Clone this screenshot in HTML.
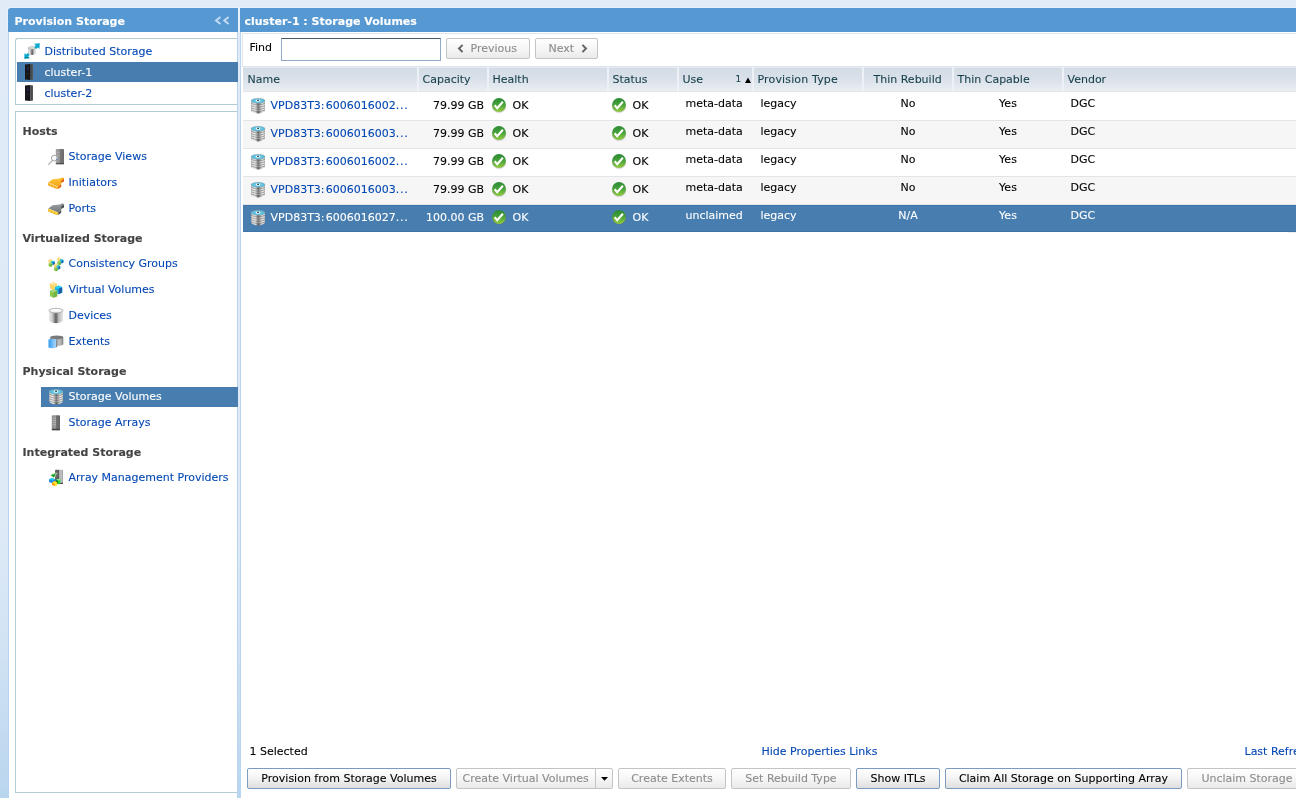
<!DOCTYPE html>
<html>
<head>
<meta charset="utf-8">
<title>Provision Storage</title>
<style>
html,body{margin:0;padding:0;}
body{width:1296px;height:798px;overflow:hidden;position:relative;
  font-family:"DejaVu Sans","Liberation Sans",sans-serif;font-size:11px;color:#000;
  background:linear-gradient(to bottom,#e0ebf7 0px,#dfeaf7 520px,#d2e3f4 640px,#b9d5ee 798px);}
#app{position:absolute;left:0;top:0;width:1296px;height:798px;will-change:transform;}
a{color:#0448b4;text-decoration:none;}
div,span,a,input{box-sizing:border-box;}
.t{position:absolute;white-space:nowrap;line-height:14px;height:14px;-webkit-text-stroke:0.1px currentColor;}
svg{position:absolute;display:block;overflow:visible;}
.hd{position:absolute;top:8px;height:24px;background:#5698d2;color:#fff;font-weight:bold;box-shadow:0 0 0 1px rgba(255,255,255,.28);}
#lbody{position:absolute;left:8px;top:32px;width:230px;height:770px;background:#fff;border-left:1px solid #b8d4f0;border-right:1px solid #b8d4f0;}
.box{position:absolute;left:15px;width:222px;border:1px solid #b3cbd3;border-right:none;background:#fff;}
.sel{position:absolute;background:#477daf;}
.w{color:#fff;}
.g{font-weight:bold;color:#444;}
#rbody{position:absolute;left:240px;top:32px;width:1060px;height:770px;background:#fff;border-left:1px solid #b8d4f0;}
#tbar{position:absolute;left:242px;top:33px;width:1060px;height:34px;border:1px solid #dde6f0;}
#find{position:absolute;left:281px;top:38px;width:160px;height:23px;background:#fff;border:1px solid #92aac8;border-top-color:#4a586c;}
.btn{position:absolute;height:21px;border:1px solid #7b9cc0;-webkit-text-stroke:0.1px currentColor;border-radius:2px;background:linear-gradient(to bottom,#ffffff 0%,#f3f3f3 50%,#dedede 100%);text-align:center;line-height:19px;white-space:nowrap;color:#000;}
.btn.dis{border-color:#c4c4c4;color:#8c8c8c;background:linear-gradient(to bottom,#ffffff 0%,#f6f6f6 50%,#eaeaea 100%);}
#thead{position:absolute;left:243px;top:67px;width:1060px;height:25px;background:linear-gradient(to bottom,#d3dbe6 0%,#d9e0e9 45%,#eaeef3 100%);border-top:1px solid #e6e9ec;border-bottom:1px solid #e3e5e8;}
.th{color:#163f4a;}
.sep{position:absolute;top:67px;width:2px;height:25px;background:#edf1f6;}
.row{position:absolute;left:243px;width:1060px;height:28px;border-bottom:1px solid #e4e4e4;}
.alt{background:#f6f6f6;}
</style>
</head>
<body>
<div id="app">
<div class="hd" style="left:8px;width:230px;border-top-left-radius:3px;"></div>
<span class="t w" style="left:14.5px;top:15px;font-weight:bold">Provision Storage</span>
<svg style="left:214px;top:16px" width="16" height="9" viewBox="0 0 16 9"><path d="M6.4 0.9L2 4.5L6.4 8.1M14.6 0.9L10.2 4.5L14.6 8.1" fill="none" stroke="#c6dcf3" stroke-width="1.9"/></svg>
<div id="lbody"></div>
<div class="box" style="top:38px;height:67px;border-top-left-radius:3px;"></div>
<svg style="left:24px;top:43px" width="16" height="16" viewBox="0 0 16 16"><defs><linearGradient id="i2_c" x1="0" x2="1" y1="0" y2="0"><stop offset="0" stop-color="#cfcfcf"/><stop offset=".25" stop-color="#e2e2e2"/><stop offset=".55" stop-color="#5a5a5a"/><stop offset=".68" stop-color="#909090"/><stop offset=".85" stop-color="#dadada"/><stop offset="1" stop-color="#c6c6c6"/></linearGradient></defs>
<path d="M4.1 5 L4.1 11 Q7.8 13.2 11.5 11 L11.5 5Z" fill="url(#i2_c)"/>
<ellipse cx="7.8" cy="5" rx="3.7" ry="1.2" fill="#e4e4e4" stroke="#a6a6a6" stroke-width=".7"/>
<path d="M15.8 0.2L10.2 0.7L11.8 2.4L10.3 4L12.2 5.9L13.8 4.4L15.4 6Z" fill="#09a9cc"/>
<path d="M0.2 15.8L5.8 15.3L4.2 13.6L5.7 12L3.8 10.1L2.2 11.6L0.6 10Z" fill="#09a9cc"/>
<path d="M0.6 15.5L5.4 15.1L4.4 14.1L1 14.4Z" fill="#067a96"/></svg>
<a class="t " style="left:44.5px;top:45px;">Distributed Storage</a>
<div class="sel" style="left:17px;top:62px;width:221px;height:20px;"></div>
<svg style="left:25px;top:64px" width="8" height="16" viewBox="0 0 8 16"><defs><linearGradient id="i3_s" x1="0" x2="1"><stop offset="0" stop-color="#3c3c3e"/><stop offset="1" stop-color="#5a5a5c"/></linearGradient></defs>
<path d="M0 0.4L5.2 0L5.2 16L0 15.6Z" fill="#17171b"/>
<path d="M5.2 0L8 0.6L8 15.4L5.2 16Z" fill="url(#i3_s)"/>
<rect x="1.4" y="2.4" width="2.6" height="1.4" fill="#23232c"/>
<rect x="1.8" y="4.5" width="2" height="0.8" fill="#2a38a0"/>
<rect x="0.8" y="9.4" width="3.6" height="0.5" fill="#2c2c32"/></svg>
<span class="t w" style="left:44.5px;top:66px;">cluster-1</span>
<svg style="left:25px;top:85px" width="8" height="16" viewBox="0 0 8 16"><defs><linearGradient id="i4_s" x1="0" x2="1"><stop offset="0" stop-color="#3c3c3e"/><stop offset="1" stop-color="#5a5a5c"/></linearGradient></defs>
<path d="M0 0.4L5.2 0L5.2 16L0 15.6Z" fill="#17171b"/>
<path d="M5.2 0L8 0.6L8 15.4L5.2 16Z" fill="url(#i4_s)"/>
<rect x="1.4" y="2.4" width="2.6" height="1.4" fill="#23232c"/>
<rect x="1.8" y="4.5" width="2" height="0.8" fill="#2a38a0"/>
<rect x="0.8" y="9.4" width="3.6" height="0.5" fill="#2c2c32"/></svg>
<a class="t " style="left:44.5px;top:87px;">cluster-2</a>
<div class="box" style="top:111px;height:682px;"></div>
<span class="t g" style="left:22.5px;top:125px;">Hosts</span>
<svg style="left:48px;top:149px" width="16" height="16" viewBox="0 0 16 16"><defs><linearGradient id="i5_t" x1="0" x2="1"><stop offset="0" stop-color="#a2a2a2"/><stop offset=".5" stop-color="#929292"/><stop offset=".55" stop-color="#767676"/><stop offset="1" stop-color="#6c6c6c"/></linearGradient></defs>
<rect x="7.8" y="0" width="8.2" height="15.2" rx=".8" fill="url(#i5_t)"/>
<rect x="7.8" y="14.1" width="8.2" height="1.1" fill="#4a4a4a"/>
<rect x="8.6" y="3" width="3" height=".6" fill="#b8b8b8"/><rect x="8.6" y="6.6" width="3" height=".6" fill="#b8b8b8"/>
<line x1="4.4" y1="11.4" x2="0.8" y2="15.2" stroke="#bdbdbd" stroke-width="1.5" stroke-linecap="round"/>
<circle cx="6.3" cy="9.1" r="2.9" fill="#f6f8fa" stroke="#a6a6a6" stroke-width="1"/>
<circle cx="8.6" cy="10.4" r=".6" fill="#5a80d0"/></svg>
<a class="t " style="left:68.5px;top:150px;">Storage Views</a>
<svg style="left:48px;top:175px" width="16" height="16" viewBox="0 0 16 16"><defs><linearGradient id="i6_g" x1="0" y1="0" x2="0" y2="1"><stop offset="0" stop-color="#ffc83a"/><stop offset="1" stop-color="#f3a41a"/></linearGradient></defs>
<path d="M12.4 3.6L14.6 2.6L16 3.4L16 6.4L13.2 8Z" fill="#e8600c"/>
<path d="M0.3 7.4L4.6 4.2L11.6 3.6L14.6 2.6L16 3.4L13.2 5.2L13.2 9.2L10.2 11.4Z" fill="url(#i6_g)"/>
<path d="M10.2 11.4L13.2 9.2L13.2 11.8L10.2 14Z" fill="#e8600c"/>
<path d="M0.2 7.4L10.2 11.4L10.2 14L7.6 13.6L0.2 10.6Z" fill="#f0a010"/>
<path d="M0.6 8.2L9.8 11.9" stroke="#fde8b0" stroke-width=".7" fill="none"/>
<rect x="1.6" y="9.3" width="1.5" height="1.5" fill="#ffd040"/><rect x="4.5" y="10.5" width="1.5" height="1.5" fill="#ffd040"/><rect x="7.4" y="11.6" width="1.5" height="1.5" fill="#ffd040"/></svg>
<a class="t " style="left:68.5px;top:176px;">Initiators</a>
<svg style="left:48px;top:201px" width="16" height="16" viewBox="0 0 16 16"><defs><linearGradient id="i7_g" x1="0" y1="0" x2="0" y2="1"><stop offset="0" stop-color="#9a9ea2"/><stop offset="1" stop-color="#74787c"/></linearGradient></defs>
<path d="M12.4 3.6L14.6 2.6L16 3.4L16 6.4L13.2 8Z" fill="#4c5054"/>
<path d="M0.3 7.4L4.6 4.2L11.6 3.6L14.6 2.6L16 3.4L13.2 5.2L13.2 9.2L10.2 11.4Z" fill="url(#i7_g)"/>
<path d="M10.2 11.4L13.2 9.2L13.2 11.8L10.2 14Z" fill="#4c5054"/>
<path d="M0.2 7.4L10.2 11.4L10.2 14L7.6 13.6L0.2 10.6Z" fill="#e8b010"/>
<path d="M0.6 8.2L9.8 11.9" stroke="#fdeeb0" stroke-width=".7" fill="none"/>
<rect x="1.6" y="9.3" width="1.5" height="1.5" fill="#ffd83a"/><rect x="4.5" y="10.5" width="1.5" height="1.5" fill="#ffd83a"/><rect x="7.4" y="11.6" width="1.5" height="1.5" fill="#ffd83a"/></svg>
<a class="t " style="left:68.5px;top:202px;">Ports</a>
<span class="t g" style="left:22.5px;top:232px;">Virtualized Storage</span>
<svg style="left:48px;top:256px" width="16" height="16" viewBox="0 0 16 16"><polygon points="0.50,3.90 2.30,3.00 4.10,3.90 4.10,6.30 2.30,7.00 0.50,6.30" fill="#fbd46c"/><polygon points="0.50,3.90 2.30,3.00 4.10,3.90 2.30,4.70" fill="#fde6a4"/><polygon points="3.10,5.60 4.90,4.80 6.70,5.60 6.70,8.30 4.90,9.10 3.10,8.30" fill="#18b6e8"/><polygon points="3.10,5.60 4.90,4.80 6.70,5.60 4.90,6.40" fill="#22d2f4"/><polygon points="4.90,6.40 6.70,5.60 6.70,8.30 4.90,9.10" fill="#1d5ca8"/><polygon points="0.60,7.40 2.40,6.60 4.20,7.40 4.20,10.10 2.40,10.90 0.60,10.10" fill="#8cc850"/><polygon points="0.60,7.40 2.40,6.60 4.20,7.40 2.40,8.20" fill="#a8d878"/><polygon points="2.40,8.20 4.20,7.40 4.20,10.10 2.40,10.90" fill="#74b444"/><polygon points="9.20,2.20 11.00,1.30 12.80,2.20 12.80,4.60 11.00,5.30 9.20,4.60" fill="#fbd46c"/><polygon points="9.20,2.20 11.00,1.30 12.80,2.20 11.00,3.00" fill="#fde6a4"/><polygon points="11.80,3.90 13.60,3.10 15.40,3.90 15.40,6.60 13.60,7.40 11.80,6.60" fill="#18b6e8"/><polygon points="11.80,3.90 13.60,3.10 15.40,3.90 13.60,4.70" fill="#22d2f4"/><polygon points="13.60,4.70 15.40,3.90 15.40,6.60 13.60,7.40" fill="#1d5ca8"/><polygon points="9.30,5.70 11.10,4.90 12.90,5.70 12.90,8.40 11.10,9.20 9.30,8.40" fill="#8cc850"/><polygon points="9.30,5.70 11.10,4.90 12.90,5.70 11.10,6.50" fill="#a8d878"/><polygon points="11.10,6.50 12.90,5.70 12.90,8.40 11.10,9.20" fill="#74b444"/><polygon points="6.00,8.30 7.80,7.40 9.60,8.30 9.60,10.70 7.80,11.40 6.00,10.70" fill="#fbd46c"/><polygon points="6.00,8.30 7.80,7.40 9.60,8.30 7.80,9.10" fill="#fde6a4"/><polygon points="8.60,10.00 10.40,9.20 12.20,10.00 12.20,12.70 10.40,13.50 8.60,12.70" fill="#18b6e8"/><polygon points="8.60,10.00 10.40,9.20 12.20,10.00 10.40,10.80" fill="#22d2f4"/><polygon points="10.40,10.80 12.20,10.00 12.20,12.70 10.40,13.50" fill="#1d5ca8"/><polygon points="6.10,11.80 7.90,11.00 9.70,11.80 9.70,14.50 7.90,15.30 6.10,14.50" fill="#8cc850"/><polygon points="6.10,11.80 7.90,11.00 9.70,11.80 7.90,12.60" fill="#a8d878"/><polygon points="7.90,12.60 9.70,11.80 9.70,14.50 7.90,15.30" fill="#74b444"/></svg>
<a class="t " style="left:68.5px;top:257px;">Consistency Groups</a>
<svg style="left:48px;top:282px" width="16" height="16" viewBox="0 0 16 16"><polygon points="1.80,1.80 5.40,0.00 9.00,1.80 9.00,6.60 5.40,8.00 1.80,6.60" fill="#fbd46c"/><polygon points="1.80,1.80 5.40,0.00 9.00,1.80 5.40,3.40" fill="#fde6a4"/><polygon points="7.00,5.20 10.60,3.60 14.20,5.20 14.20,10.60 10.60,12.20 7.00,10.60" fill="#18b6e8"/><polygon points="7.00,5.20 10.60,3.60 14.20,5.20 10.60,6.80" fill="#22d2f4"/><polygon points="10.60,6.80 14.20,5.20 14.20,10.60 10.60,12.20" fill="#1d5ca8"/><polygon points="2.00,8.80 5.60,7.20 9.20,8.80 9.20,14.20 5.60,15.80 2.00,14.20" fill="#8cc850"/><polygon points="2.00,8.80 5.60,7.20 9.20,8.80 5.60,10.40" fill="#a8d878"/><polygon points="5.60,10.40 9.20,8.80 9.20,14.20 5.60,15.80" fill="#74b444"/></svg>
<a class="t " style="left:68.5px;top:283px;">Virtual Volumes</a>
<svg style="left:48px;top:308px" width="16" height="16" viewBox="0 0 16 16"><defs><linearGradient id="i10_c" x1="0" x2="1"><stop offset="0" stop-color="#ececec"/><stop offset=".25" stop-color="#c8c8c8"/><stop offset=".5" stop-color="#5c5c5c"/><stop offset=".68" stop-color="#b8b8b8"/><stop offset="1" stop-color="#e8e8e8"/></linearGradient></defs>
<path d="M0.9 2.6L0.9 13 Q8 17.4 15.1 13L15.1 2.6Z" fill="url(#i10_c)"/>
<ellipse cx="8" cy="2.6" rx="7.1" ry="2.3" fill="#efefef" stroke="#a8a8a8" stroke-width=".8"/>
<ellipse cx="8" cy="2.2" rx="4.6" ry="1.3" fill="#fafafa"/></svg>
<a class="t " style="left:68.5px;top:309px;">Devices</a>
<svg style="left:48px;top:334px" width="16" height="16" viewBox="0 0 16 16"><defs><linearGradient id="i11_c" x1="0" x2="1"><stop offset="0" stop-color="#8a8a8a"/><stop offset=".5" stop-color="#c6c6c6"/><stop offset=".8" stop-color="#b4b4b4"/><stop offset="1" stop-color="#7c7c7c"/></linearGradient>
<linearGradient id="i11_b" x1="0" x2="1"><stop offset="0" stop-color="#2e9af2"/><stop offset=".6" stop-color="#86c4f8"/><stop offset="1" stop-color="#b2daf9"/></linearGradient></defs>
<path d="M2.2 3.4L2.2 10.6 Q8.8 13.6 15.3 10.6L15.3 3.4Z" fill="url(#i11_c)"/>
<ellipse cx="8.75" cy="3.4" rx="6.55" ry="1.9" fill="#7a7a7a"/>
<path d="M0.5 5.6 Q4.6 4 8.8 5.4 L8.8 13.2 Q4.6 15 0.5 13.4Z" fill="url(#i11_b)"/>
<path d="M8.8 5.4L8.8 13.2" stroke="#555" stroke-width=".8"/></svg>
<a class="t " style="left:68.5px;top:335px;">Extents</a>
<span class="t g" style="left:22.5px;top:365px;">Physical Storage</span>
<div class="sel" style="left:41px;top:387px;width:197px;height:20px;"></div>
<svg style="left:49px;top:389px" width="15" height="16" viewBox="0 0 15 16"><defs><linearGradient id="i12_c" x1="0" x2="1"><stop offset="0" stop-color="#a8a8a8"/><stop offset=".08" stop-color="#dadada"/><stop offset=".3" stop-color="#e6e6e6"/><stop offset=".52" stop-color="#585858"/><stop offset=".64" stop-color="#9c9c9c"/><stop offset=".8" stop-color="#e2e2e2"/><stop offset=".94" stop-color="#d2d2d2"/><stop offset="1" stop-color="#a4a4a4"/></linearGradient>
<radialGradient id="i12_t" cx=".5" cy=".5" r=".6"><stop offset="0" stop-color="#92d8ec"/><stop offset="1" stop-color="#36aed4"/></radialGradient></defs>
<path d="M0.1 2.7L0.1 12.9 Q7.05 18 14 12.9L14 2.7Z" fill="url(#i12_c)"/>
<path d="M0.2 5.4Q7.05 8.6 13.9 5.4M0.2 7.6Q7.05 10.8 13.9 7.6M0.2 9.8Q7.05 13 13.9 9.8M0.2 11.9Q7.05 15.1 13.9 11.9" stroke="#7c7c7c" stroke-width=".8" fill="none" opacity=".85"/>
<path d="M0.2 6.5Q7.05 9.7 13.9 6.5M0.2 8.7Q7.05 11.9 13.9 8.7M0.2 10.9Q7.05 14.1 13.9 10.9" stroke="#fff" stroke-width=".6" fill="none" opacity=".5"/>
<ellipse cx="7.05" cy="2.8" rx="6.95" ry="2.5" fill="url(#i12_t)" stroke="#9aa4a8" stroke-width=".5"/>
<rect x="5.1" y="1.5" width="3.9" height="2.1" rx=".5" fill="#f4fbfd"/><rect x="6.2" y="1.7" width="1.7" height="1.3" fill="#2a3a44"/></svg>
<span class="t w" style="left:68.5px;top:390px;">Storage Volumes</span>
<svg style="left:48px;top:415px" width="16" height="16" viewBox="0 0 16 16"><defs><linearGradient id="i13_t" x1="0" x2="1"><stop offset="0" stop-color="#8c8c8c"/><stop offset=".45" stop-color="#989898"/><stop offset=".55" stop-color="#707070"/><stop offset="1" stop-color="#646464"/></linearGradient></defs>
<rect x="3.8" y="0.2" width="8.2" height="15" rx=".9" fill="url(#i13_t)"/>
<rect x="3.8" y="13.8" width="8.2" height="1.4" rx=".5" fill="#444"/>
<path d="M4.4 3.2h3.6M4.4 5.4h3.6M4.4 7.6h3.6M4.4 9.8h3.6" stroke="#c4c4c4" stroke-width=".6"/></svg>
<a class="t " style="left:68.5px;top:416px;">Storage Arrays</a>
<span class="t g" style="left:22.5px;top:446px;">Integrated Storage</span>
<svg style="left:48px;top:470px" width="16" height="16" viewBox="0 0 16 16"><defs><linearGradient id="i14_t" x1="0" x2="1"><stop offset="0" stop-color="#6a6a6a"/><stop offset=".45" stop-color="#606060"/><stop offset=".55" stop-color="#b0b0b0"/><stop offset=".9" stop-color="#c6c6c6"/><stop offset="1" stop-color="#6e6e6e"/></linearGradient></defs>
<rect x="7" y="-0.2" width="8" height="14.2" rx=".9" fill="url(#i14_t)"/>
<rect x="7" y="12.8" width="8" height="1.2" fill="#4a4a4a"/>
<path d="M2.6 5.8L5.4 3L5.4 4.2Q8 2.4 9.4 3.4Q7.6 3.6 7.2 5.2L8.2 5.6L5.6 7.6Z" fill="#1fa030" stroke="#eef6d0" stroke-width=".5"/>
<polygon points="1,9.2 4,8 7.2,9.2 7.2,12 4.2,13.2 1,12" fill="#1e8ee6"/><polygon points="1,9.2 4,8 7.2,9.2 4.2,10.4" fill="#28ccf2"/>
<polygon points="8.2,9.8 10.4,9 12.4,9.8 12.4,13.2 10.2,14.2 8.2,13.2" fill="#2ee23a"/><polygon points="8.2,9.8 10.2,10.6 10.2,14.2 8.2,13.2" fill="#137a22"/><polygon points="8.2,9.8 10.4,9 12.4,9.8 10.2,10.6" fill="#90f49a"/>
<polygon points="4,12.4 6.6,11.2 9.2,12.4 9.2,15 6.6,16 4,15" fill="#ff9a08"/><polygon points="6.6,13.4 9.2,12.4 9.2,15 6.6,16" fill="#fdf020"/><polygon points="4,12.4 6.6,11.2 9.2,12.4 6.6,13.4" fill="#ffe640"/></svg>
<a class="t " style="left:68.5px;top:471px;">Array Management Providers</a>
<div class="hd" style="left:240px;width:1060px;"></div>
<span class="t w" style="left:244.5px;top:15px;font-weight:bold">cluster-1 : Storage Volumes</span>
<div id="rbody"></div>
<div id="tbar"></div>
<span class="t " style="left:249.5px;top:41px;">Find</span>
<div id="find"></div>
<div class="btn dis" style="left:446px;top:38px;width:84px;"></div>
<svg style="left:457px;top:44px" width="7" height="9" viewBox="0 0 7 9"><path d="M5.6 0.9L2 4.5L5.6 8.1" fill="none" stroke="#666" stroke-width="2"/></svg>
<span class="t " style="left:470.5px;top:42px;color:#8c8c8c">Previous</span>
<div class="btn dis" style="left:535px;top:38px;width:63px;"></div>
<span class="t " style="left:548.5px;top:42px;color:#8c8c8c">Next</span>
<svg style="left:581px;top:44px" width="7" height="9" viewBox="0 0 7 9"><path d="M1.4 0.9L5 4.5L1.4 8.1" fill="none" stroke="#666" stroke-width="2"/></svg>
<div id="thead"></div>
<span class="t th" style="left:247.5px;top:73px;">Name</span>
<div class="sep" style="left:417px"></div>
<span class="t th" style="left:422.5px;top:73px;">Capacity</span>
<div class="sep" style="left:487px"></div>
<span class="t th" style="left:492.5px;top:73px;">Health</span>
<div class="sep" style="left:607px"></div>
<span class="t th" style="left:612.5px;top:73px;">Status</span>
<div class="sep" style="left:677px"></div>
<span class="t th" style="left:682.5px;top:73px;">Use</span>
<div class="sep" style="left:752px"></div>
<span class="t th" style="left:757.5px;top:73px;letter-spacing:.15px">Provision Type</span>
<div class="sep" style="left:862px"></div>
<span class="t th" style="left:873.5px;top:73px;">Thin Rebuild</span>
<div class="sep" style="left:952px"></div>
<span class="t th" style="left:957.5px;top:73px;">Thin Capable</span>
<div class="sep" style="left:1062px"></div>
<span class="t th" style="left:1067.5px;top:73px;">Vendor</span>
<span class="t th" style="left:735.5px;top:72px;font-size:9px">1</span>
<svg style="left:745px;top:77px" width="6" height="6" viewBox="0 0 6 6"><path d="M0 6L3 0.4L6 6Z" fill="#000"/></svg>
<div class="row" style="top:93px"></div>
<svg style="left:251px;top:98px" width="15" height="16" viewBox="0 0 15 16"><defs><linearGradient id="i18_c" x1="0" x2="1"><stop offset="0" stop-color="#a8a8a8"/><stop offset=".08" stop-color="#dadada"/><stop offset=".3" stop-color="#e6e6e6"/><stop offset=".52" stop-color="#585858"/><stop offset=".64" stop-color="#9c9c9c"/><stop offset=".8" stop-color="#e2e2e2"/><stop offset=".94" stop-color="#d2d2d2"/><stop offset="1" stop-color="#a4a4a4"/></linearGradient>
<radialGradient id="i18_t" cx=".5" cy=".5" r=".6"><stop offset="0" stop-color="#92d8ec"/><stop offset="1" stop-color="#36aed4"/></radialGradient></defs>
<path d="M0.1 2.7L0.1 12.9 Q7.05 18 14 12.9L14 2.7Z" fill="url(#i18_c)"/>
<path d="M0.2 5.4Q7.05 8.6 13.9 5.4M0.2 7.6Q7.05 10.8 13.9 7.6M0.2 9.8Q7.05 13 13.9 9.8M0.2 11.9Q7.05 15.1 13.9 11.9" stroke="#7c7c7c" stroke-width=".8" fill="none" opacity=".85"/>
<path d="M0.2 6.5Q7.05 9.7 13.9 6.5M0.2 8.7Q7.05 11.9 13.9 8.7M0.2 10.9Q7.05 14.1 13.9 10.9" stroke="#fff" stroke-width=".6" fill="none" opacity=".5"/>
<ellipse cx="7.05" cy="2.8" rx="6.95" ry="2.5" fill="url(#i18_t)" stroke="#9aa4a8" stroke-width=".5"/>
<rect x="5.1" y="1.5" width="3.9" height="2.1" rx=".5" fill="#f4fbfd"/><rect x="6.2" y="1.7" width="1.7" height="1.3" fill="#2a3a44"/></svg>
<a class="t " style="left:270.5px;top:99px;">VPD83T3<span style="letter-spacing:1.2px">:</span>6006016002<span style="letter-spacing:.7px">...</span></a>
<span class="t " style="left:399px;width:85px;text-align:right;top:99px">79.99 GB</span>
<svg style="left:492px;top:98px" width="14" height="15" viewBox="0 0 14 15"><defs><linearGradient id="i19_g" x1="0" y1="0" x2="0" y2="1"><stop offset="0" stop-color="#2a8a36"/><stop offset=".45" stop-color="#46a03a"/><stop offset="1" stop-color="#92cc3e"/></linearGradient>
<radialGradient id="i19_s" cx=".5" cy=".5" r=".5"><stop offset=".75" stop-color="#6a5a7a" stop-opacity=".45"/><stop offset="1" stop-color="#6a5a7a" stop-opacity="0"/></radialGradient></defs>
<ellipse cx="7" cy="8" rx="7.8" ry="7.4" fill="url(#i19_s)"/>
<circle cx="7" cy="7" r="6.9" fill="url(#i19_g)"/>
<path d="M2.6 7.3L5.2 10.1L10.9 3.7" fill="none" stroke="#fff" stroke-width="2.1"/></svg>
<span class="t " style="left:512.5px;top:99px;">OK</span>
<svg style="left:612px;top:98px" width="14" height="15" viewBox="0 0 14 15"><defs><linearGradient id="i20_g" x1="0" y1="0" x2="0" y2="1"><stop offset="0" stop-color="#2a8a36"/><stop offset=".45" stop-color="#46a03a"/><stop offset="1" stop-color="#92cc3e"/></linearGradient>
<radialGradient id="i20_s" cx=".5" cy=".5" r=".5"><stop offset=".75" stop-color="#6a5a7a" stop-opacity=".45"/><stop offset="1" stop-color="#6a5a7a" stop-opacity="0"/></radialGradient></defs>
<ellipse cx="7" cy="8" rx="7.8" ry="7.4" fill="url(#i20_s)"/>
<circle cx="7" cy="7" r="6.9" fill="url(#i20_g)"/>
<path d="M2.6 7.3L5.2 10.1L10.9 3.7" fill="none" stroke="#fff" stroke-width="2.1"/></svg>
<span class="t " style="left:632.5px;top:99px;">OK</span>
<span class="t " style="left:685.5px;top:97px;">meta-data</span>
<span class="t " style="left:760.5px;top:97px;">legacy</span>
<span class="t " style="left:863px;width:90px;text-align:center;top:97px">No</span>
<span class="t " style="left:953px;width:110px;text-align:center;top:97px">Yes</span>
<span class="t " style="left:1070.5px;top:97px;">DGC</span>
<div class="row alt" style="top:121px"></div>
<svg style="left:251px;top:126px" width="15" height="16" viewBox="0 0 15 16"><defs><linearGradient id="i21_c" x1="0" x2="1"><stop offset="0" stop-color="#a8a8a8"/><stop offset=".08" stop-color="#dadada"/><stop offset=".3" stop-color="#e6e6e6"/><stop offset=".52" stop-color="#585858"/><stop offset=".64" stop-color="#9c9c9c"/><stop offset=".8" stop-color="#e2e2e2"/><stop offset=".94" stop-color="#d2d2d2"/><stop offset="1" stop-color="#a4a4a4"/></linearGradient>
<radialGradient id="i21_t" cx=".5" cy=".5" r=".6"><stop offset="0" stop-color="#92d8ec"/><stop offset="1" stop-color="#36aed4"/></radialGradient></defs>
<path d="M0.1 2.7L0.1 12.9 Q7.05 18 14 12.9L14 2.7Z" fill="url(#i21_c)"/>
<path d="M0.2 5.4Q7.05 8.6 13.9 5.4M0.2 7.6Q7.05 10.8 13.9 7.6M0.2 9.8Q7.05 13 13.9 9.8M0.2 11.9Q7.05 15.1 13.9 11.9" stroke="#7c7c7c" stroke-width=".8" fill="none" opacity=".85"/>
<path d="M0.2 6.5Q7.05 9.7 13.9 6.5M0.2 8.7Q7.05 11.9 13.9 8.7M0.2 10.9Q7.05 14.1 13.9 10.9" stroke="#fff" stroke-width=".6" fill="none" opacity=".5"/>
<ellipse cx="7.05" cy="2.8" rx="6.95" ry="2.5" fill="url(#i21_t)" stroke="#9aa4a8" stroke-width=".5"/>
<rect x="5.1" y="1.5" width="3.9" height="2.1" rx=".5" fill="#f4fbfd"/><rect x="6.2" y="1.7" width="1.7" height="1.3" fill="#2a3a44"/></svg>
<a class="t " style="left:270.5px;top:127px;">VPD83T3<span style="letter-spacing:1.2px">:</span>6006016003<span style="letter-spacing:.7px">...</span></a>
<span class="t " style="left:399px;width:85px;text-align:right;top:127px">79.99 GB</span>
<svg style="left:492px;top:126px" width="14" height="15" viewBox="0 0 14 15"><defs><linearGradient id="i22_g" x1="0" y1="0" x2="0" y2="1"><stop offset="0" stop-color="#2a8a36"/><stop offset=".45" stop-color="#46a03a"/><stop offset="1" stop-color="#92cc3e"/></linearGradient>
<radialGradient id="i22_s" cx=".5" cy=".5" r=".5"><stop offset=".75" stop-color="#6a5a7a" stop-opacity=".45"/><stop offset="1" stop-color="#6a5a7a" stop-opacity="0"/></radialGradient></defs>
<ellipse cx="7" cy="8" rx="7.8" ry="7.4" fill="url(#i22_s)"/>
<circle cx="7" cy="7" r="6.9" fill="url(#i22_g)"/>
<path d="M2.6 7.3L5.2 10.1L10.9 3.7" fill="none" stroke="#fff" stroke-width="2.1"/></svg>
<span class="t " style="left:512.5px;top:127px;">OK</span>
<svg style="left:612px;top:126px" width="14" height="15" viewBox="0 0 14 15"><defs><linearGradient id="i23_g" x1="0" y1="0" x2="0" y2="1"><stop offset="0" stop-color="#2a8a36"/><stop offset=".45" stop-color="#46a03a"/><stop offset="1" stop-color="#92cc3e"/></linearGradient>
<radialGradient id="i23_s" cx=".5" cy=".5" r=".5"><stop offset=".75" stop-color="#6a5a7a" stop-opacity=".45"/><stop offset="1" stop-color="#6a5a7a" stop-opacity="0"/></radialGradient></defs>
<ellipse cx="7" cy="8" rx="7.8" ry="7.4" fill="url(#i23_s)"/>
<circle cx="7" cy="7" r="6.9" fill="url(#i23_g)"/>
<path d="M2.6 7.3L5.2 10.1L10.9 3.7" fill="none" stroke="#fff" stroke-width="2.1"/></svg>
<span class="t " style="left:632.5px;top:127px;">OK</span>
<span class="t " style="left:685.5px;top:125px;">meta-data</span>
<span class="t " style="left:760.5px;top:125px;">legacy</span>
<span class="t " style="left:863px;width:90px;text-align:center;top:125px">No</span>
<span class="t " style="left:953px;width:110px;text-align:center;top:125px">Yes</span>
<span class="t " style="left:1070.5px;top:125px;">DGC</span>
<div class="row" style="top:149px"></div>
<svg style="left:251px;top:154px" width="15" height="16" viewBox="0 0 15 16"><defs><linearGradient id="i24_c" x1="0" x2="1"><stop offset="0" stop-color="#a8a8a8"/><stop offset=".08" stop-color="#dadada"/><stop offset=".3" stop-color="#e6e6e6"/><stop offset=".52" stop-color="#585858"/><stop offset=".64" stop-color="#9c9c9c"/><stop offset=".8" stop-color="#e2e2e2"/><stop offset=".94" stop-color="#d2d2d2"/><stop offset="1" stop-color="#a4a4a4"/></linearGradient>
<radialGradient id="i24_t" cx=".5" cy=".5" r=".6"><stop offset="0" stop-color="#92d8ec"/><stop offset="1" stop-color="#36aed4"/></radialGradient></defs>
<path d="M0.1 2.7L0.1 12.9 Q7.05 18 14 12.9L14 2.7Z" fill="url(#i24_c)"/>
<path d="M0.2 5.4Q7.05 8.6 13.9 5.4M0.2 7.6Q7.05 10.8 13.9 7.6M0.2 9.8Q7.05 13 13.9 9.8M0.2 11.9Q7.05 15.1 13.9 11.9" stroke="#7c7c7c" stroke-width=".8" fill="none" opacity=".85"/>
<path d="M0.2 6.5Q7.05 9.7 13.9 6.5M0.2 8.7Q7.05 11.9 13.9 8.7M0.2 10.9Q7.05 14.1 13.9 10.9" stroke="#fff" stroke-width=".6" fill="none" opacity=".5"/>
<ellipse cx="7.05" cy="2.8" rx="6.95" ry="2.5" fill="url(#i24_t)" stroke="#9aa4a8" stroke-width=".5"/>
<rect x="5.1" y="1.5" width="3.9" height="2.1" rx=".5" fill="#f4fbfd"/><rect x="6.2" y="1.7" width="1.7" height="1.3" fill="#2a3a44"/></svg>
<a class="t " style="left:270.5px;top:155px;">VPD83T3<span style="letter-spacing:1.2px">:</span>6006016002<span style="letter-spacing:.7px">...</span></a>
<span class="t " style="left:399px;width:85px;text-align:right;top:155px">79.99 GB</span>
<svg style="left:492px;top:154px" width="14" height="15" viewBox="0 0 14 15"><defs><linearGradient id="i25_g" x1="0" y1="0" x2="0" y2="1"><stop offset="0" stop-color="#2a8a36"/><stop offset=".45" stop-color="#46a03a"/><stop offset="1" stop-color="#92cc3e"/></linearGradient>
<radialGradient id="i25_s" cx=".5" cy=".5" r=".5"><stop offset=".75" stop-color="#6a5a7a" stop-opacity=".45"/><stop offset="1" stop-color="#6a5a7a" stop-opacity="0"/></radialGradient></defs>
<ellipse cx="7" cy="8" rx="7.8" ry="7.4" fill="url(#i25_s)"/>
<circle cx="7" cy="7" r="6.9" fill="url(#i25_g)"/>
<path d="M2.6 7.3L5.2 10.1L10.9 3.7" fill="none" stroke="#fff" stroke-width="2.1"/></svg>
<span class="t " style="left:512.5px;top:155px;">OK</span>
<svg style="left:612px;top:154px" width="14" height="15" viewBox="0 0 14 15"><defs><linearGradient id="i26_g" x1="0" y1="0" x2="0" y2="1"><stop offset="0" stop-color="#2a8a36"/><stop offset=".45" stop-color="#46a03a"/><stop offset="1" stop-color="#92cc3e"/></linearGradient>
<radialGradient id="i26_s" cx=".5" cy=".5" r=".5"><stop offset=".75" stop-color="#6a5a7a" stop-opacity=".45"/><stop offset="1" stop-color="#6a5a7a" stop-opacity="0"/></radialGradient></defs>
<ellipse cx="7" cy="8" rx="7.8" ry="7.4" fill="url(#i26_s)"/>
<circle cx="7" cy="7" r="6.9" fill="url(#i26_g)"/>
<path d="M2.6 7.3L5.2 10.1L10.9 3.7" fill="none" stroke="#fff" stroke-width="2.1"/></svg>
<span class="t " style="left:632.5px;top:155px;">OK</span>
<span class="t " style="left:685.5px;top:153px;">meta-data</span>
<span class="t " style="left:760.5px;top:153px;">legacy</span>
<span class="t " style="left:863px;width:90px;text-align:center;top:153px">No</span>
<span class="t " style="left:953px;width:110px;text-align:center;top:153px">Yes</span>
<span class="t " style="left:1070.5px;top:153px;">DGC</span>
<div class="row alt" style="top:177px"></div>
<svg style="left:251px;top:182px" width="15" height="16" viewBox="0 0 15 16"><defs><linearGradient id="i27_c" x1="0" x2="1"><stop offset="0" stop-color="#a8a8a8"/><stop offset=".08" stop-color="#dadada"/><stop offset=".3" stop-color="#e6e6e6"/><stop offset=".52" stop-color="#585858"/><stop offset=".64" stop-color="#9c9c9c"/><stop offset=".8" stop-color="#e2e2e2"/><stop offset=".94" stop-color="#d2d2d2"/><stop offset="1" stop-color="#a4a4a4"/></linearGradient>
<radialGradient id="i27_t" cx=".5" cy=".5" r=".6"><stop offset="0" stop-color="#92d8ec"/><stop offset="1" stop-color="#36aed4"/></radialGradient></defs>
<path d="M0.1 2.7L0.1 12.9 Q7.05 18 14 12.9L14 2.7Z" fill="url(#i27_c)"/>
<path d="M0.2 5.4Q7.05 8.6 13.9 5.4M0.2 7.6Q7.05 10.8 13.9 7.6M0.2 9.8Q7.05 13 13.9 9.8M0.2 11.9Q7.05 15.1 13.9 11.9" stroke="#7c7c7c" stroke-width=".8" fill="none" opacity=".85"/>
<path d="M0.2 6.5Q7.05 9.7 13.9 6.5M0.2 8.7Q7.05 11.9 13.9 8.7M0.2 10.9Q7.05 14.1 13.9 10.9" stroke="#fff" stroke-width=".6" fill="none" opacity=".5"/>
<ellipse cx="7.05" cy="2.8" rx="6.95" ry="2.5" fill="url(#i27_t)" stroke="#9aa4a8" stroke-width=".5"/>
<rect x="5.1" y="1.5" width="3.9" height="2.1" rx=".5" fill="#f4fbfd"/><rect x="6.2" y="1.7" width="1.7" height="1.3" fill="#2a3a44"/></svg>
<a class="t " style="left:270.5px;top:183px;">VPD83T3<span style="letter-spacing:1.2px">:</span>6006016003<span style="letter-spacing:.7px">...</span></a>
<span class="t " style="left:399px;width:85px;text-align:right;top:183px">79.99 GB</span>
<svg style="left:492px;top:182px" width="14" height="15" viewBox="0 0 14 15"><defs><linearGradient id="i28_g" x1="0" y1="0" x2="0" y2="1"><stop offset="0" stop-color="#2a8a36"/><stop offset=".45" stop-color="#46a03a"/><stop offset="1" stop-color="#92cc3e"/></linearGradient>
<radialGradient id="i28_s" cx=".5" cy=".5" r=".5"><stop offset=".75" stop-color="#6a5a7a" stop-opacity=".45"/><stop offset="1" stop-color="#6a5a7a" stop-opacity="0"/></radialGradient></defs>
<ellipse cx="7" cy="8" rx="7.8" ry="7.4" fill="url(#i28_s)"/>
<circle cx="7" cy="7" r="6.9" fill="url(#i28_g)"/>
<path d="M2.6 7.3L5.2 10.1L10.9 3.7" fill="none" stroke="#fff" stroke-width="2.1"/></svg>
<span class="t " style="left:512.5px;top:183px;">OK</span>
<svg style="left:612px;top:182px" width="14" height="15" viewBox="0 0 14 15"><defs><linearGradient id="i29_g" x1="0" y1="0" x2="0" y2="1"><stop offset="0" stop-color="#2a8a36"/><stop offset=".45" stop-color="#46a03a"/><stop offset="1" stop-color="#92cc3e"/></linearGradient>
<radialGradient id="i29_s" cx=".5" cy=".5" r=".5"><stop offset=".75" stop-color="#6a5a7a" stop-opacity=".45"/><stop offset="1" stop-color="#6a5a7a" stop-opacity="0"/></radialGradient></defs>
<ellipse cx="7" cy="8" rx="7.8" ry="7.4" fill="url(#i29_s)"/>
<circle cx="7" cy="7" r="6.9" fill="url(#i29_g)"/>
<path d="M2.6 7.3L5.2 10.1L10.9 3.7" fill="none" stroke="#fff" stroke-width="2.1"/></svg>
<span class="t " style="left:632.5px;top:183px;">OK</span>
<span class="t " style="left:685.5px;top:181px;">meta-data</span>
<span class="t " style="left:760.5px;top:181px;">legacy</span>
<span class="t " style="left:863px;width:90px;text-align:center;top:181px">No</span>
<span class="t " style="left:953px;width:110px;text-align:center;top:181px">Yes</span>
<span class="t " style="left:1070.5px;top:181px;">DGC</span>
<div class="sel" style="left:243px;top:205px;width:1060px;height:27px;border-top:1px solid #3d74a9;border-bottom:1px solid #3d74a9;"></div>
<div style="position:absolute;left:1288px;top:232px;width:8px;height:1px;background:#ededed"></div>
<svg style="left:251px;top:210px" width="15" height="16" viewBox="0 0 15 16"><defs><linearGradient id="i30_c" x1="0" x2="1"><stop offset="0" stop-color="#a8a8a8"/><stop offset=".08" stop-color="#dadada"/><stop offset=".3" stop-color="#e6e6e6"/><stop offset=".52" stop-color="#585858"/><stop offset=".64" stop-color="#9c9c9c"/><stop offset=".8" stop-color="#e2e2e2"/><stop offset=".94" stop-color="#d2d2d2"/><stop offset="1" stop-color="#a4a4a4"/></linearGradient>
<radialGradient id="i30_t" cx=".5" cy=".5" r=".6"><stop offset="0" stop-color="#92d8ec"/><stop offset="1" stop-color="#36aed4"/></radialGradient></defs>
<path d="M0.1 2.7L0.1 12.9 Q7.05 18 14 12.9L14 2.7Z" fill="url(#i30_c)"/>
<path d="M0.2 5.4Q7.05 8.6 13.9 5.4M0.2 7.6Q7.05 10.8 13.9 7.6M0.2 9.8Q7.05 13 13.9 9.8M0.2 11.9Q7.05 15.1 13.9 11.9" stroke="#7c7c7c" stroke-width=".8" fill="none" opacity=".85"/>
<path d="M0.2 6.5Q7.05 9.7 13.9 6.5M0.2 8.7Q7.05 11.9 13.9 8.7M0.2 10.9Q7.05 14.1 13.9 10.9" stroke="#fff" stroke-width=".6" fill="none" opacity=".5"/>
<ellipse cx="7.05" cy="2.8" rx="6.95" ry="2.5" fill="url(#i30_t)" stroke="#9aa4a8" stroke-width=".5"/>
<rect x="5.1" y="1.5" width="3.9" height="2.1" rx=".5" fill="#f4fbfd"/><rect x="6.2" y="1.7" width="1.7" height="1.3" fill="#2a3a44"/></svg>
<span class="t w" style="left:270.5px;top:211px;">VPD83T3<span style="letter-spacing:1.2px">:</span>6006016027<span style="letter-spacing:.7px">...</span></span>
<span class="t w" style="left:399px;width:85px;text-align:right;top:211px">100.00 GB</span>
<svg style="left:492px;top:210px" width="14" height="15" viewBox="0 0 14 15"><defs><linearGradient id="i31_g" x1="0" y1="0" x2="0" y2="1"><stop offset="0" stop-color="#2a8a36"/><stop offset=".45" stop-color="#46a03a"/><stop offset="1" stop-color="#92cc3e"/></linearGradient>
<radialGradient id="i31_s" cx=".5" cy=".5" r=".5"><stop offset=".75" stop-color="#6a5a7a" stop-opacity=".45"/><stop offset="1" stop-color="#6a5a7a" stop-opacity="0"/></radialGradient></defs>
<ellipse cx="7" cy="8" rx="7.8" ry="7.4" fill="url(#i31_s)"/>
<circle cx="7" cy="7" r="6.9" fill="url(#i31_g)"/>
<path d="M2.6 7.3L5.2 10.1L10.9 3.7" fill="none" stroke="#fff" stroke-width="2.1"/></svg>
<span class="t w" style="left:512.5px;top:211px;">OK</span>
<svg style="left:612px;top:210px" width="14" height="15" viewBox="0 0 14 15"><defs><linearGradient id="i32_g" x1="0" y1="0" x2="0" y2="1"><stop offset="0" stop-color="#2a8a36"/><stop offset=".45" stop-color="#46a03a"/><stop offset="1" stop-color="#92cc3e"/></linearGradient>
<radialGradient id="i32_s" cx=".5" cy=".5" r=".5"><stop offset=".75" stop-color="#6a5a7a" stop-opacity=".45"/><stop offset="1" stop-color="#6a5a7a" stop-opacity="0"/></radialGradient></defs>
<ellipse cx="7" cy="8" rx="7.8" ry="7.4" fill="url(#i32_s)"/>
<circle cx="7" cy="7" r="6.9" fill="url(#i32_g)"/>
<path d="M2.6 7.3L5.2 10.1L10.9 3.7" fill="none" stroke="#fff" stroke-width="2.1"/></svg>
<span class="t w" style="left:632.5px;top:211px;">OK</span>
<span class="t w" style="left:685.5px;top:209px;">unclaimed</span>
<span class="t w" style="left:760.5px;top:209px;">legacy</span>
<span class="t w" style="left:863px;width:90px;text-align:center;top:209px">N/A</span>
<span class="t w" style="left:953px;width:110px;text-align:center;top:209px">Yes</span>
<span class="t w" style="left:1070.5px;top:209px;">DGC</span>
<span class="t " style="left:249.5px;top:745px;">1 Selected</span>
<a class="t " style="left:761.5px;top:745px;">Hide Properties Links</a>
<a class="t " style="left:1244.5px;top:745px;">Last Refresh</a>
<div class="btn" style="left:247px;top:768px;width:204px;">Provision from Storage Volumes</div>
<div class="btn dis" style="left:456px;top:768px;width:157px;"></div>
<span class="t " style="left:462.5px;top:772px;color:#8c8c8c">Create Virtual Volumes</span>
<div style="position:absolute;left:595px;top:769px;width:1px;height:19px;background:#c4c4c4"></div>
<svg style="left:600.5px;top:777px" width="7" height="4" viewBox="0 0 7 4"><path d="M0 0L7 0L3.5 3.8Z" fill="#000"/></svg>
<div class="btn dis" style="left:618px;top:768px;width:108px;">Create Extents</div>
<div class="btn dis" style="left:731px;top:768px;width:120px;">Set Rebuild Type</div>
<div class="btn" style="left:856px;top:768px;width:84px;">Show ITLs</div>
<div class="btn" style="left:945px;top:768px;width:237px;">Claim All Storage on Supporting Array</div>
<div class="btn dis" style="left:1187px;top:768px;width:120px;">Unclaim Storage</div>
</div>
</body>
</html>
